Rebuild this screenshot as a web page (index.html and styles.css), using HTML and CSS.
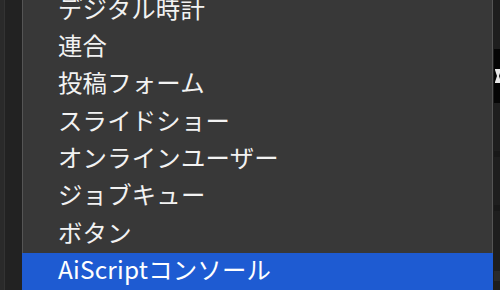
FILE: index.html
```html
<!DOCTYPE html>
<html lang="ja">
<head>
<meta charset="utf-8">
<link rel="stylesheet" href="styles.css">
</head>
<body>
<div class="screen">
  <div class="sidebar"></div>
  <ul class="menu">
    <li class="item">デジタル時計</li>
    <li class="item">連合</li>
    <li class="item">投稿フォーム</li>
    <li class="item">スライドショー</li>
    <li class="item">オンラインユーザー</li>
    <li class="item">ジョブキュー</li>
    <li class="item">ボタン</li>
    <li class="item selected">AiScriptコンソール</li>
  </ul>
  <div class="edge">
    <div class="edge-block">
      <svg class="edge-glyph" width="6" height="14" viewBox="0 0 6 14"><polygon points="0,0 6,0 6,1 4,7 6,13 6,14 0,14 0,13 2,7 0,1" fill="#e8e8e8"/></svg>
    </div>
    <div class="edge-mark m1"></div>
    <div class="edge-mark m2"></div>
    <div class="edge-mark m3"></div>
  </div>
</div>
</body>
</html>
```

FILE: styles.css
```css
html, body {
  margin: 0;
  padding: 0;
  background: #1e1e1e;
  overflow: hidden;
}
.screen {
  display: flex;
  height: 290px;
  width: 500px;
  overflow: hidden;
}
.sidebar {
  width: 18px;
  flex: none;
  border-left: 4px solid #2a2a2a;
  background: #222222;
  box-shadow: inset 1px 0 #333333;
}
.menu {
  list-style: none;
  margin: -8.33px 0 0 0;
  padding: 0;
  width: 471px;
  flex: none;
  background: #383838;
  box-shadow: inset 1px 0 #555555, inset -1px 0 #555555;
  font-family: "Noto Sans CJK JP", "Noto Sans", sans-serif;
  font-size: 24.4px;
  color: #f2f2f2;
}
.item {
  height: 37.33px;
  line-height: 31px;
  padding-left: 36px;
  box-sizing: border-box;
  white-space: nowrap;
  letter-spacing: 0.2px;
}
.item.selected {
  background: #1e5bd2;
  color: #ffffff;
}
.edge {
  flex: 1;
  display: flex;
  flex-direction: column;
  background: #1e1e1e;
  padding-top: 49px;
  padding-left: 1px;
}
.edge-block {
  height: 54px;
  background: #050505;
  padding-top: 20px;
  box-sizing: border-box;
}
.edge-glyph {
  display: block;
  margin-left: 1px;
}
.edge-mark {
  height: 6px;
  background: #181818;
}
.m1 { margin-top: 48px; }
.m2 { margin-top: 48px; }
.m3 { margin-top: 60px; height: 10px; background: #2a2a2a; }
```
